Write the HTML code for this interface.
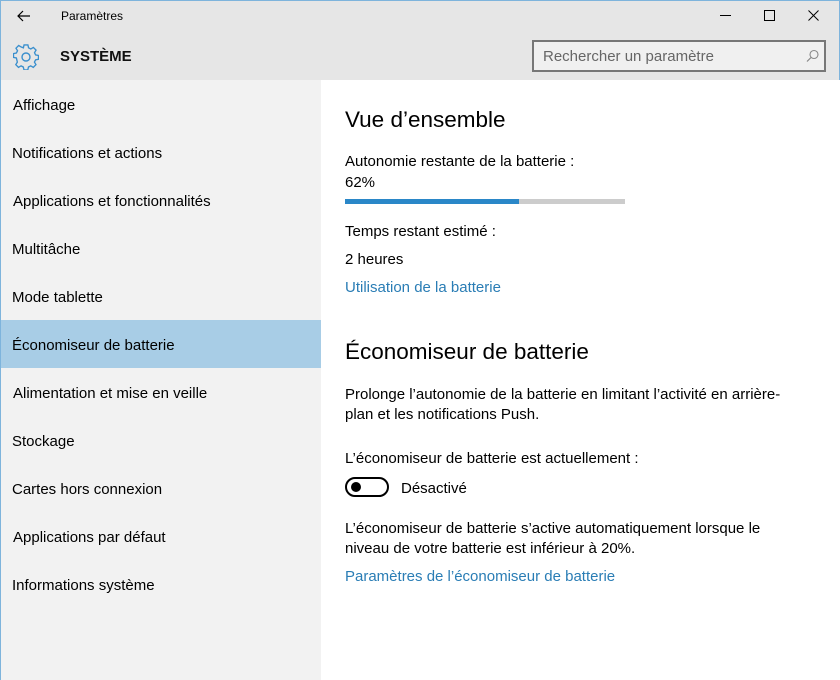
<!DOCTYPE html>
<html><head><meta charset="utf-8"><style>
*{margin:0;padding:0;box-sizing:border-box}
body{width:840px;height:680px;overflow:hidden;font-family:"Liberation Sans",sans-serif;color:#000;background:#fff;position:relative}
.t{position:absolute;white-space:nowrap;font-size:15px;margin-top:1px}
#top{position:absolute;left:0;top:0;width:840px;height:80px;background:#e6e6e6;border-top:1px solid #7eb4dc;border-left:1px solid #7eb4dc;border-right:1px solid #7eb4dc}
#side{position:absolute;left:0;top:80px;width:321px;height:600px;background:#f2f2f2;border-left:1px solid #7eb4dc}
.sel{position:absolute;left:1px;top:320px;width:320px;height:48px;background:#a8cde6}
.link{color:#2a7db5}
</style></head><body>
<div id="top"></div>
<div id="side"></div>
<div class="sel"></div>
<svg style="position:absolute;left:17px;top:9px" width="14" height="14" viewBox="0 0 14 14"><path d="M13 7H1M6 2L1 7l5 5" fill="none" stroke="#000" stroke-width="1.2"/></svg>
<div class="t" style="left:61px;top:8px;font-size:12px">Paramètres</div>
<svg style="position:absolute;left:720px;top:15px" width="12" height="2"><rect width="11" height="1" fill="#000"/></svg>
<svg style="position:absolute;left:764px;top:10px" width="12" height="12"><rect x=".5" y=".5" width="10" height="10" fill="none" stroke="#000"/></svg>
<svg style="position:absolute;left:808px;top:10px" width="12" height="12"><path d="M.5 .5l10 10M10.5 .5l-10 10" stroke="#000"/></svg>
<svg style="position:absolute;left:13px;top:44px" width="26" height="26" viewBox="0 0 26 26"><g fill="none" stroke="#3a8fcd" stroke-width="1.4"><circle cx="13" cy="13" r="4"/><path d="M11 2h4l.7 3 2.3 1.2 2.7-1.6 2.8 2.8-1.6 2.7L23 12.4l3 .6v4l-3 .6-1.2 2.3 1.6 2.7-2.8 2.8-2.7-1.6-2.3 1.2-.7 3h-4l-.7-3-2.3-1.2-2.7 1.6-2.8-2.8 1.6-2.7L3 15.6 0 15v-4l3-.6 1.2-2.3-1.6-2.7 2.8-2.8 2.7 1.6L10.3 5z" transform="translate(0.5 -1) scale(.96)"/></g></svg>
<div class="t" style="left:60px;top:47px;font-size:15px;font-weight:bold;color:#111">SYSTÈME</div>
<div style="position:absolute;left:532px;top:40px;width:294px;height:32px;border:2px solid #777;background:#f0f0f0"></div>
<div class="t" style="left:543px;top:47px;color:#666">Rechercher un paramètre</div>
<svg style="position:absolute;left:806px;top:49px" width="14" height="14" viewBox="0 0 14 14"><circle cx="8" cy="5.5" r="4" fill="none" stroke="#888" stroke-width="1.1"/><path d="M5 8.5L1 12.5" stroke="#888" stroke-width="1.2"/></svg>
<div class="t" style="left:13px;top:96px">Affichage</div>
<div class="t" style="left:12px;top:144px">Notifications et actions</div>
<div class="t" style="left:13px;top:192px">Applications et fonctionnalités</div>
<div class="t" style="left:12px;top:240px">Multitâche</div>
<div class="t" style="left:12px;top:288px">Mode tablette</div>
<div class="t" style="left:12px;top:336px">Économiseur de batterie</div>
<div class="t" style="left:13px;top:384px">Alimentation et mise en veille</div>
<div class="t" style="left:12px;top:432px">Stockage</div>
<div class="t" style="left:12px;top:480px">Cartes hors connexion</div>
<div class="t" style="left:13px;top:528px">Applications par défaut</div>
<div class="t" style="left:12px;top:576px">Informations système</div>

<div class="t" style="left:345px;top:106px;font-size:22.5px">Vue d’ensemble</div>
<div class="t" style="left:345px;top:152px">Autonomie restante de la batterie :</div>
<div class="t" style="left:345px;top:173px">62%</div>
<div style="position:absolute;left:345px;top:199px;width:280px;height:5px;background:#ccc"><div style="width:174px;height:5px;background:#2a87c8"></div></div>
<div class="t" style="left:345px;top:222px">Temps restant estimé :</div>
<div class="t" style="left:345px;top:250px">2 heures</div>
<div class="t link" style="left:345px;top:278px">Utilisation de la batterie</div>
<div class="t" style="left:345px;top:338px;font-size:22.5px">Économiseur de batterie</div>
<div class="t" style="left:345px;top:385px">Prolonge l’autonomie de la batterie en limitant l’activité en arrière-</div>
<div class="t" style="left:345px;top:405px">plan et les notifications Push.</div>
<div class="t" style="left:345px;top:449px">L’économiseur de batterie est actuellement :</div>
<div style="position:absolute;left:345px;top:477px;width:44px;height:20px;border:2px solid #000;border-radius:10px"><div style="position:absolute;left:4px;top:3px;width:10px;height:10px;border-radius:50%;background:#000"></div></div>
<div class="t" style="left:401px;top:479px">Désactivé</div>
<div class="t" style="left:345px;top:519px">L’économiseur de batterie s’active automatiquement lorsque le</div>
<div class="t" style="left:345px;top:539px">niveau de votre batterie est inférieur à 20%.</div>
<div class="t link" style="left:345px;top:567px">Paramètres de l’économiseur de batterie</div>
</body></html>
